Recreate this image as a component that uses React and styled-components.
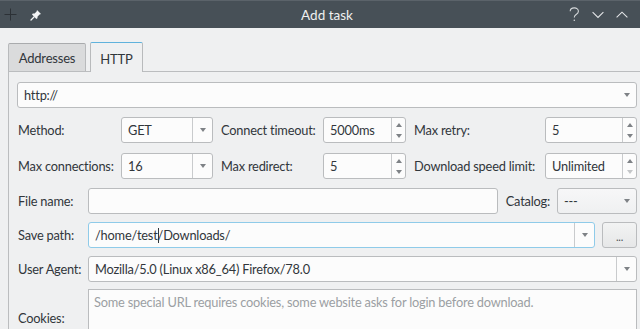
import React from "react";
import styled, { createGlobalStyle } from "styled-components";

const Global = createGlobalStyle`
  html, body { margin: 0; padding: 0; background: #eff0f1; overflow: hidden; }
  body { font-family: "Lato", "Noto Sans", sans-serif; font-size: 12.8px; letter-spacing: -0.2px; color: #31363b; }
`;

const Window = styled.div`
  width: 654px;
  height: 329px;
  overflow: hidden;
  background: #eff0f1;
  display: flex;
  flex-direction: column;
`;

const TitleBar = styled.div`
  height: 27px;
  flex: none;
  border-top: 1px solid #5b636a;
  background: #475057;
  display: flex;
  align-items: center;
  position: relative;
`;

const TitleLeft = styled.div`
  display: flex;
  align-items: center;
  gap: 13px;
  padding-left: 4px;
`;

const TitleText = styled.div`
  position: absolute;
  left: 0;
  right: 0;
  text-align: center;
  color: #eff0f1;
  font-size: 13.5px;
  letter-spacing: 0;
  pointer-events: none;
`;

const TitleRight = styled.div`
  margin-left: auto;
  display: flex;
  align-items: center;
  gap: 12px;
  padding-right: 26px;
`;

const TabBar = styled.div`
  display: flex;
  align-items: flex-end;
  gap: 4px;
  padding-left: 8px;
  margin-top: 14px;
  height: 29px;
  flex: none;
`;

const Tab = styled.div`
  box-sizing: border-box;
  height: ${(p) => (p.$active ? "30px" : "28px")};
  margin-bottom: ${(p) => (p.$active ? "-1px" : "0")};
  width: ${(p) => p.$w}px;
  display: flex;
  align-items: center;
  justify-content: center;
  padding-top: ${(p) => (p.$active ? "3px" : "1px")};
  border: 1px solid #b8babc;
  border-bottom: none;
  border-top: 1px solid ${(p) => (p.$active ? "#5fb2dc" : "#a9abad")};
  background: ${(p) => (p.$active ? "#eff0f1" : "#dadbdc")};
  border-radius: 2px 2px 0 0;
  position: relative;
  z-index: ${(p) => (p.$active ? 1 : 0)};
  font-size: 13px;
`;

const Panel = styled.div`
  margin: 0 8px;
  border: 1px solid #bbbdbf;
  padding: 10px 8px 0 8px;
  flex: 1;
  display: flex;
  flex-direction: column;
`;

const FieldBox = styled.div`
  box-sizing: border-box;
  height: 26px;
  min-width: 0;
  display: flex;
  align-items: stretch;
  border: 1px solid ${(p) => (p.$focus ? "#8fcbe9" : "#babcbe")};
  border-radius: 3px;
  background: ${(p) => (p.$button ? "linear-gradient(#f7f7f8, #eff0f1)" : "#fcfcfc")};
  overflow: hidden;
`;

const FieldText = styled.div`
  flex: 1;
  display: flex;
  align-items: center;
  padding-left: ${(p) => p.$pl ?? 6}px;
  white-space: nowrap;
  overflow: hidden;
  color: #31363b;
`;

const Caret = styled.span`
  display: inline-block;
  width: 1px;
  height: 15px;
  background: #31363b;
  margin-right: -1px;
  position: relative;
  left: 0.5px;
`;

const ArrowZone = styled.div`
  width: 19px;
  flex: none;
  display: flex;
  align-items: center;
  justify-content: center;
  border-left: ${(p) => (p.$divider ? "1px solid #c9cbcd" : "none")};
`;

const Triangle = styled.div`
  width: 0;
  height: 0;
  border-left: 3.5px solid transparent;
  border-right: 3.5px solid transparent;
  ${(p) => (p.$up ? "border-bottom" : "border-top")}: 4px solid ${(p) => (p.$dim ? "#c4c6c8" : "#7e8286")};
`;

const SpinZone = styled.div`
  width: 13px;
  flex: none;
  display: flex;
  flex-direction: column;
  align-items: center;
  justify-content: center;
  gap: 7px;
  border-left: 1px solid #c9cbcd;
`;

const Label = styled.div`
  white-space: nowrap;
  padding-left: 1px;
`;

const UrlRow = styled.div`
  display: flex;
`;

const Grid = styled.div`
  display: grid;
  grid-template-columns: 97px 92px 96px 83px 125px 92px;
  column-gap: 7px;
  row-gap: 10px;
  align-items: center;
  margin-top: 9px;
`;

const Form = styled.div`
  display: grid;
  grid-template-columns: 64px 1fr;
  column-gap: 7px;
  row-gap: 8px;
  align-items: center;
  margin-top: 9px;
`;

const Line = styled.div`
  display: flex;
  align-items: center;
  gap: 7px;
  min-width: 0;
`;

const Grow = styled.div`
  flex: 1;
  min-width: 0;
`;

const Fixed = styled.div`
  width: ${(p) => p.$w}px;
  flex: none;
`;

const Button = styled.div`
  box-sizing: border-box;
  width: 35px;
  height: 26px;
  flex: none;
  border: 1px solid #babcbe;
  border-radius: 3px;
  background: linear-gradient(#f2f3f3, #e6e7e8);
  display: flex;
  align-items: center;
  justify-content: center;
  font-size: 11px;
  color: #4d5257;
  padding-top: 3px;
`;

const TextArea = styled.div`
  box-sizing: border-box;
  height: 57px;
  margin-top: -1px;
  border: 1px solid #babcbe;
  background: #fcfcfc;
  padding: 4px 5px;
  color: #9b9fa3;
  white-space: nowrap;
  overflow: hidden;
`;

function Combo({ value, divider, button, focus, children }) {
  return (
    <FieldBox $button={button} $focus={focus}>
      <FieldText>{children ?? value}</FieldText>
      <ArrowZone $divider={divider}>
        <Triangle />
      </ArrowZone>
    </FieldBox>
  );
}

function Spin({ value, dimDown }) {
  return (
    <FieldBox>
      <FieldText>{value}</FieldText>
      <SpinZone>
        <Triangle $up />
        <Triangle $dim={dimDown} />
      </SpinZone>
    </FieldBox>
  );
}

const PlusIcon = () => (
  <svg width="13" height="13" viewBox="0 0 13 13">
    <path d="M6.5 0.5V12.5M0.5 6.5H12.5" stroke="#2c3136" strokeWidth="1" />
  </svg>
);

const PinIcon = () => (
  <svg width="12" height="12" viewBox="0 0 12 12">
    <path d="M7 1 L11 5 L9.6 5.4 L7.6 7.4 L7.4 9.2 L6.4 10 L2 5.6 L2.8 4.6 L4.6 4.4 L6.6 2.4 Z" fill="#f4f5f6" />
    <path d="M4 8 L1 11" stroke="#f4f5f6" strokeWidth="1.3" strokeLinecap="round" />
  </svg>
);

const HelpIcon = () => (
  <svg width="11" height="15" viewBox="0 0 11 15">
    <path d="M1.2 4.2 C1.2 2.1 3 0.9 5.3 0.9 C7.7 0.9 9.4 2.3 9.4 4.3 C9.4 6.2 8 6.9 6.8 7.7 C5.8 8.4 5.3 9 5.3 10.4" fill="none" stroke="#d5d8da" strokeWidth="1.1" />
    <circle cx="5.3" cy="13.2" r="0.8" fill="#d5d8da" />
  </svg>
);

const ChevronDown = () => (
  <svg width="12" height="8" viewBox="0 0 12 8">
    <path d="M0.6 1.2 L6 6.4 L11.4 1.2" fill="none" stroke="#e3e5e7" strokeWidth="1.1" />
  </svg>
);

const ChevronUp = () => (
  <svg width="12" height="8" viewBox="0 0 12 8">
    <path d="M0.6 6.4 L6 1.2 L11.4 6.4" fill="none" stroke="#e3e5e7" strokeWidth="1.1" />
  </svg>
);

export default function App() {
  return (
    <>
      <Global />
      <Window>
        <TitleBar>
          <TitleLeft>
            <PlusIcon />
            <PinIcon />
          </TitleLeft>
          <TitleText>Add task</TitleText>
          <TitleRight>
            <HelpIcon />
            <ChevronDown />
            <ChevronUp />
          </TitleRight>
        </TitleBar>
        <TabBar>
          <Tab $w={78}>Addresses</Tab>
          <Tab $w={53} $active>HTTP</Tab>
        </TabBar>
        <Panel>
          <UrlRow>
            <Grow>
              <Combo value="http://" />
            </Grow>
          </UrlRow>
          <Grid>
            <Label>Method:</Label>
            <Combo value="GET" divider />
            <Label>Connect timeout:</Label>
            <Spin value="5000ms" />
            <Label>Max retry:</Label>
            <Spin value="5" />
            <Label>Max connections:</Label>
            <Combo value="16" divider />
            <Label>Max redirect:</Label>
            <Spin value="5" />
            <Label>Download speed limit:</Label>
            <Spin value="Unlimited" dimDown />
          </Grid>
          <Form>
            <Label>File name:</Label>
            <Line>
              <Grow>
                <FieldBox>
                  <FieldText />
                </FieldBox>
              </Grow>
              <Label>Catalog:</Label>
              <Fixed $w={80}>
                <Combo value="---" button />
              </Fixed>
            </Line>
            <Label>Save path:</Label>
            <Line>
              <Grow>
                <Combo divider focus>
                  /home/test<Caret />/Downloads/
                </Combo>
              </Grow>
              <Button>...</Button>
            </Line>
            <Label>User Agent:</Label>
            <Combo value="Mozilla/5.0 (Linux x86_64) Firefox/78.0" divider />
            <Label>Cookies:</Label>
            <TextArea>Some special URL requires cookies, some website asks for login before download.</TextArea>
          </Form>
        </Panel>
      </Window>
    </>
  );
}
